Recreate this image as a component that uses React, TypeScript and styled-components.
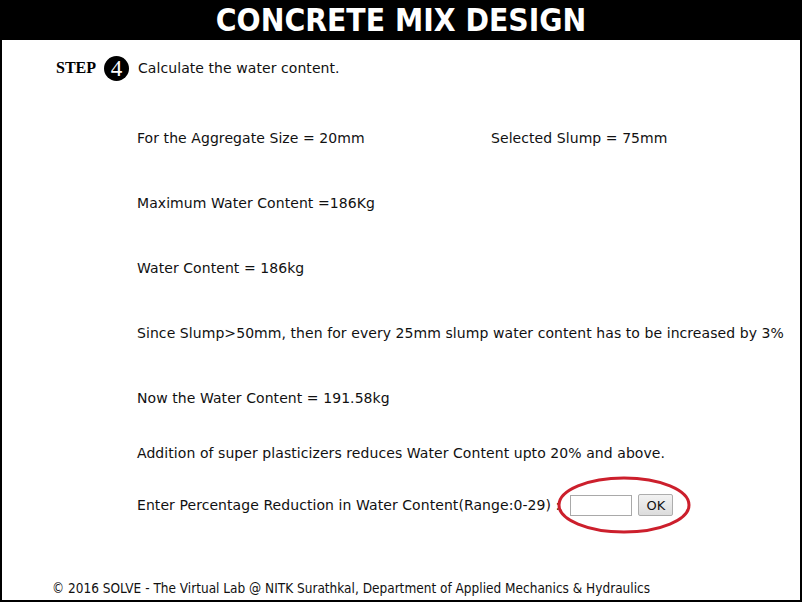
import React from "react";
import styled, { createGlobalStyle } from "styled-components";

const GlobalStyle = createGlobalStyle`
  html, body {
    margin: 0;
    padding: 0;
    background: #ffffff;
  }
  body {
    font-family: "DejaVu Sans", Verdana, sans-serif;
  }
`;

function App() {
  return (
    <>
      <GlobalStyle />
      <Frame>
        <Header>CONCRETE MIX DESIGN</Header>
        <Body>
          <StepRow>
            <StepLabel>STEP</StepLabel>
            <StepNumber>4</StepNumber>
            <StepText>Calculate the water content.</StepText>
          </StepRow>

          <Lines>
            <Line top={47}>
              <Cell width={354}>For the Aggregate Size = 20mm</Cell>
              <Cell>Selected Slump = 75mm</Cell>
            </Line>
            <Line top={45}>Maximum Water Content =186Kg</Line>
            <Line top={45}>Water Content = 186kg</Line>
            <Line top={45}>
              Since Slump&gt;50mm, then for every 25mm slump water content has to be increased by 3%
            </Line>
            <Line top={45}>Now the Water Content = 191.58kg</Line>
            <Line top={35}>
              Addition of super plasticizers reduces Water Content upto 20% and above.
            </Line>
            <InputRow>
              <span>Enter Percentage Reduction in Water Content(Range:0-29) :</span>
              <InputGroup>
                <TextBox type="text" />
                <OkButton>OK</OkButton>
                <Highlight width="136" height="60" viewBox="0 0 136 60">
                  <ellipse cx="68" cy="30" rx="65" ry="27" fill="none" stroke="#cc1f2c" strokeWidth="3" />
                </Highlight>
              </InputGroup>
            </InputRow>
          </Lines>

          <Footer>
            © 2016 SOLVE - The Virtual Lab @ NITK Surathkal, Department of Applied Mechanics &amp; Hydraulics
          </Footer>
        </Body>
      </Frame>
    </>
  );
}

const Frame = styled.div`
  box-sizing: border-box;
  width: 802px;
  height: 602px;
  border-left: 2px solid #000;
  border-right: 2px solid #000;
  border-bottom: 2px solid #000;
  display: flex;
  flex-direction: column;
`;

const Header = styled.div`
  height: 40px;
  margin: 0 -2px;
  background: #000;
  color: #fff;
  font-family: "DejaVu Sans Condensed", "DejaVu Sans", sans-serif;
  font-weight: 700;
  font-size: 31.5px;
  line-height: 40px;
  text-align: center;
`;

const Body = styled.div`
  flex: 1;
  display: flex;
  flex-direction: column;
  color: #111;
`;

const StepRow = styled.div`
  display: flex;
  align-items: center;
  height: 26px;
  margin-top: 15px;
  padding-left: 54px;
`;

const StepLabel = styled.span`
  font-family: "Liberation Serif", serif;
  font-weight: 700;
  font-size: 16px;
  color: #000;
`;

const StepNumber = styled.span`
  display: inline-flex;
  align-items: center;
  justify-content: center;
  width: 25px;
  height: 25px;
  margin-left: 8px;
  border-radius: 50%;
  background: #000;
  color: #fff;
  font-family: "Liberation Serif", serif;
  font-size: 23px;
  line-height: 1;
`;

const StepText = styled.span`
  margin-left: 9px;
  font-size: 14px;
  letter-spacing: 0.07px;
`;

const Lines = styled.div`
  display: flex;
  flex-direction: column;
  padding-left: 135px;
`;

const Line = styled.div<{ top: number }>`
  display: flex;
  margin-top: ${({ top }) => top}px;
  height: 20px;
  line-height: 20px;
  font-size: 14px;
  letter-spacing: 0.07px;
  white-space: nowrap;
`;

const Cell = styled.span<{ width?: number }>`
  width: ${({ width }) => (width ? `${width}px` : "auto")};
`;

const InputRow = styled.div`
  display: flex;
  align-items: center;
  margin-top: 31px;
  height: 22px;
  font-size: 14px;
  letter-spacing: 0.07px;
  white-space: nowrap;
`;

const InputGroup = styled.div`
  position: relative;
  display: flex;
  align-items: center;
  gap: 6px;
  margin-left: 10px;
`;

const TextBox = styled.input`
  box-sizing: border-box;
  width: 62px;
  height: 21px;
  border: 1px solid #a9a9a9;
  padding: 0 3px;
  font-size: 13px;
`;

const OkButton = styled.button`
  box-sizing: border-box;
  width: 35px;
  height: 22px;
  padding: 0;
  border: 1px solid #adadad;
  border-radius: 2px;
  background: linear-gradient(#f2f2f2, #dcdcdc);
  font-family: "DejaVu Sans", sans-serif;
  font-size: 13px;
  letter-spacing: 0;
  color: #111;
`;

const Highlight = styled.svg`
  position: absolute;
  left: -14px;
  top: -19px;
  pointer-events: none;
`;

const Footer = styled.div`
  margin-top: auto;
  margin-bottom: 3px;
  padding-left: 50px;
  font-family: "DejaVu Sans Condensed", "DejaVu Sans", sans-serif;
  font-size: 13.5px;
  line-height: 18px;
  color: #111;
  white-space: nowrap;
`;

export default App;
